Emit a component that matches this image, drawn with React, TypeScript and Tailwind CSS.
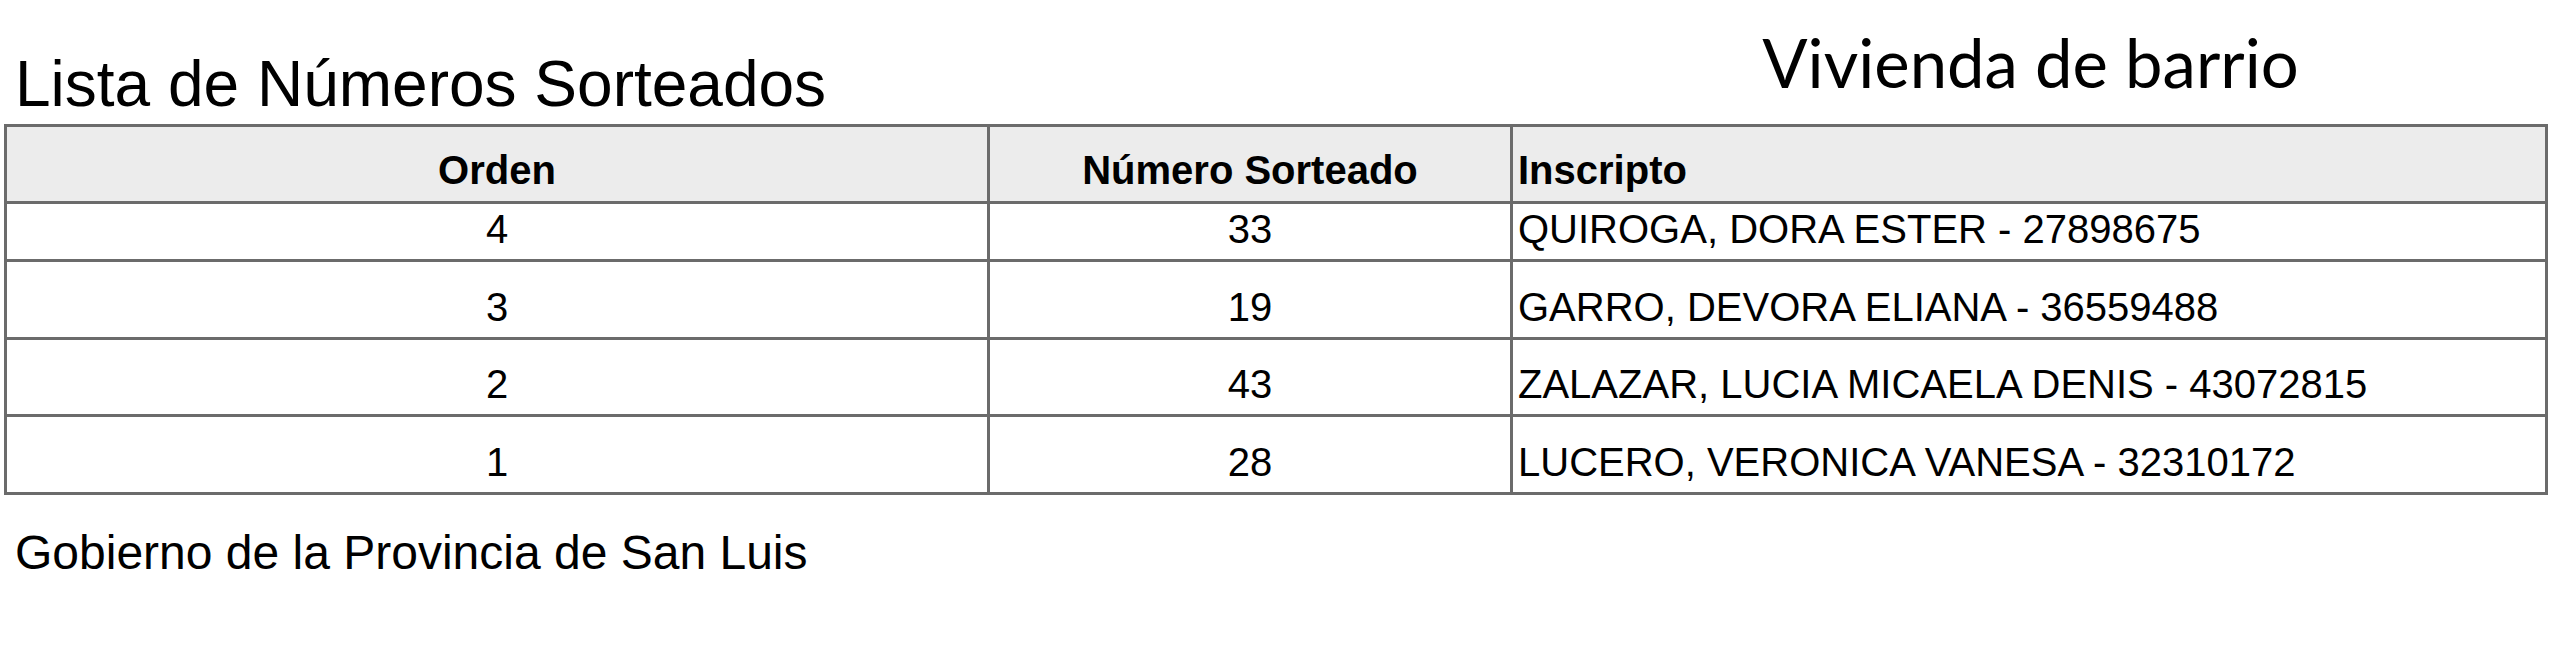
const ROWS = [
  { orden: 4, numero: 33, inscripto: "QUIROGA, DORA ESTER - 27898675", h: "h-[58px]" },
  { orden: 3, numero: 19, inscripto: "GARRO, DEVORA ELIANA - 36559488", h: "h-[78px]" },
  { orden: 2, numero: 43, inscripto: "ZALAZAR, LUCIA MICAELA DENIS - 43072815", h: "h-[77px]" },
  { orden: 1, numero: 28, inscripto: "LUCERO, VERONICA VANESA - 32310172", h: "h-[78px]" },
];

export default function App() {
  return (
    <div className="h-[651px] w-[2560px] bg-white font-['Liberation_Sans',Arial,sans-serif] text-black">
      {/* encabezado */}
      <div className="flex h-[124px]">
        <div className="w-[1513px] pl-[15px] pt-[52px]">
          <h1 className="text-[64px] leading-none">Lista de Números Sorteados</h1>
        </div>
        <div className="flex w-[1035px] justify-center pt-[29px]">
          <span className="font-['Lato','Open_Sans',sans-serif] text-[67px] leading-none">
            Vivienda de barrio
          </span>
        </div>
      </div>

      {/* tabla */}
      <div className="ml-[4px] w-[2544px] border-[3px] border-[#6b6b6b]">
        <div className="grid h-[74px] grid-cols-[980px_523px_1035px] bg-[#ececec] text-[40px] font-bold leading-none">
          <div className="flex items-end justify-center pb-[11px]">Orden</div>
          <div className="flex items-end justify-center border-l-[3px] border-[#6b6b6b] pb-[11px]">
            Número Sorteado
          </div>
          <div className="flex items-end border-l-[3px] border-[#6b6b6b] pb-[11px] pl-[5px]">
            Inscripto
          </div>
        </div>
        {ROWS.map((r) => (
          <div
            key={r.orden}
            className={`grid grid-cols-[980px_523px_1035px] border-t-[3px] border-[#6b6b6b] text-[40px] leading-none ${r.h}`}
          >
            <div className="flex items-end justify-center pb-[10px]">{r.orden}</div>
            <div className="flex items-end justify-center border-l-[3px] border-[#6b6b6b] pb-[10px]">
              {r.numero}
            </div>
            <div className="flex items-end border-l-[3px] border-[#6b6b6b] pb-[10px] pl-[5px]">
              {r.inscripto}
            </div>
          </div>
        ))}
      </div>

      <p className="ml-[15px] mt-[34px] text-[48px] leading-none">Gobierno de la Provincia de San Luis</p>
    </div>
  );
}
